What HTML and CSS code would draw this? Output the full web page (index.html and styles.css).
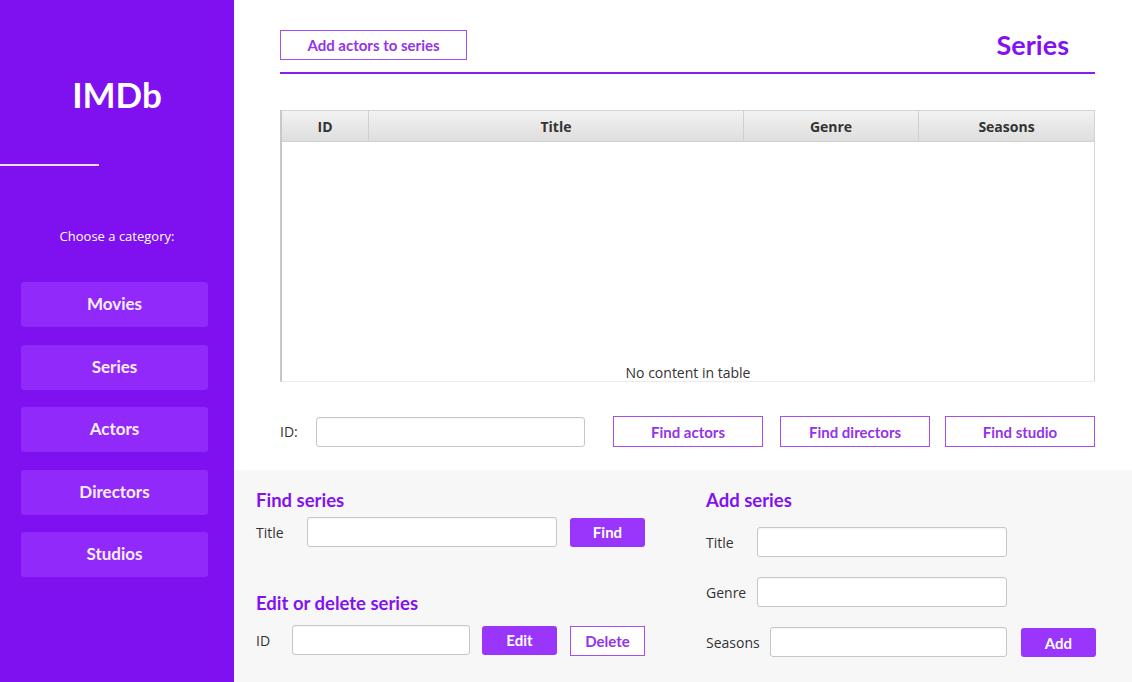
FILE: index.html
```html
<!DOCTYPE html>
<html>
<head>
<meta charset="utf-8">
<link rel="stylesheet" href="styles.css">
</head>
<body>
<div class="app">
  <aside class="sidebar">
    <div class="logo">IMDb</div>
    <div class="logo-line"></div>
    <div class="choose">Choose a category:</div>
    <nav class="nav">
      <div class="nav-btn">Movies</div>
      <div class="nav-btn">Series</div>
      <div class="nav-btn">Actors</div>
      <div class="nav-btn">Directors</div>
      <div class="nav-btn">Studios</div>
    </nav>
  </aside>
  <main class="main">
    <section class="top">
      <div class="header">
        <div class="btn-outline btn-add-actors">Add actors to series</div>
        <div class="page-title">Series</div>
      </div>
      <div class="header-line"></div>
      <div class="table">
        <div class="thead">
          <div class="th c-id">ID</div>
          <div class="th c-title">Title</div>
          <div class="th c-genre">Genre</div>
          <div class="th c-seasons">Seasons</div>
        </div>
        <div class="tbody">
          <div class="empty">No content in table</div>
        </div>
      </div>
      <div class="id-row">
        <span class="label">ID:</span>
        <div class="input id-input"></div>
        <div class="btn-outline btn-find">Find actors</div>
        <div class="btn-outline btn-find">Find directors</div>
        <div class="btn-outline btn-find">Find studio</div>
      </div>
    </section>
    <section class="bottom">
      <div class="col-left">
        <div class="block">
          <div class="section-title">Find series</div>
          <div class="row">
            <span class="label lbl-title">Title</span>
            <div class="input find-input"></div>
            <div class="btn-fill">Find</div>
          </div>
        </div>
        <div class="block block-edit">
          <div class="section-title">Edit or delete series</div>
          <div class="row">
            <span class="label lbl-id">ID</span>
            <div class="input edit-input"></div>
            <div class="btn-fill">Edit</div>
            <div class="btn-outline btn-delete">Delete</div>
          </div>
        </div>
      </div>
      <div class="col-right">
        <div class="section-title">Add series</div>
        <div class="add-rows">
          <div class="row">
            <span class="label lbl-w">Title</span>
            <div class="input add-input"></div>
          </div>
          <div class="row">
            <span class="label lbl-w">Genre</span>
            <div class="input add-input"></div>
          </div>
          <div class="row">
            <span class="label lbl-seasons">Seasons</span>
            <div class="input seasons-input"></div>
            <div class="btn-fill btn-add">Add</div>
          </div>
        </div>
      </div>
    </section>
  </main>
</div>
</body>
</html>
```

FILE: styles.css
```css
* { box-sizing: border-box; }
html, body { margin: 0; padding: 0; }
body {
  width: 1132px;
  height: 682px;
  overflow: hidden;
  font-family: "Open Sans", "Noto Sans", sans-serif;
  background: #fff;
}
.app {
  display: flex;
  height: 682px;
}
.sidebar {
  width: 234px;
  flex: none;
  background: #7f10f0;
  display: flex;
  flex-direction: column;
  color: #fff;
}
.logo {
  margin-top: 73px;
  text-align: center;
  font-family: "Lato", sans-serif;
  font-weight: 700;
  font-size: 35px;
  line-height: 42px;
}
.logo-line {
  margin-top: 49px;
  width: 99px;
  height: 2px;
  background: #f2d9f5;
}
.choose {
  margin-top: 61px;
  text-align: center;
  font-size: 13px;
  line-height: 18px;
  color: #fff;
}
.nav {
  margin-top: 37px;
  padding: 0 26px 0 21px;
  display: flex;
  flex-direction: column;
  gap: 17.5px;
}
.nav-btn {
  height: 45px;
  background: #9129fb;
  border-radius: 3px;
  display: flex;
  align-items: center;
  justify-content: center;
  font-family: "Lato", sans-serif;
  font-weight: 700;
  font-size: 17px;
  color: #fbeefe;
  padding-bottom: 2px;
}
.main {
  flex: 1;
  display: flex;
  flex-direction: column;
}
.top {
  height: 470px;
  padding: 30px 38px 0 46px;
  background: #fff;
}
.header {
  display: flex;
  align-items: center;
  justify-content: space-between;
  height: 30px;
}
.btn-outline {
  border: 1.5px solid #a44ef5;
  color: #9333ea;
  background: #fff;
  display: flex;
  align-items: center;
  justify-content: center;
  font-family: "Lato", sans-serif;
  font-weight: 700;
  font-size: 15px;
}
.btn-add-actors {
  width: 187px;
  height: 30px;
}
.page-title {
  font-family: "Lato", sans-serif;
  font-weight: 700;
  font-size: 27px;
  color: #8412ee;
  margin-right: 26px;
  margin-top: -2px;
}
.header-line {
  margin-top: 12px;
  height: 2px;
  background: #8a1cf0;
}
.table {
  margin-top: 36px;
  height: 272px;
  border: 1px solid #d4d4d4;
  border-left: 2px solid #c8c8c8;
  border-bottom: 1px solid #ececec;
  display: flex;
  flex-direction: column;
  overflow: hidden;
}
.thead {
  display: flex;
  height: 31px;
  background: linear-gradient(#f2f2f2, #dedede);
  border-bottom: 1px solid #d0d0d0;
}
.th {
  display: flex;
  align-items: center;
  justify-content: center;
  font-weight: 700;
  font-size: 14px;
  color: #333;
  border-right: 1px solid #d0d0d0;
}
.c-id { width: 87px; }
.c-title { width: 375px; }
.c-genre { width: 175px; }
.c-seasons { flex: 1; border-right: none; }
.tbody {
  flex: 1;
  display: flex;
  align-items: flex-end;
  justify-content: center;
}
.empty {
  font-size: 14px;
  color: #333;
  line-height: 18px;
  margin-bottom: -1px;
}
.id-row {
  margin-top: 34px;
  display: flex;
  align-items: center;
  height: 31px;
}
.label {
  font-size: 14px;
  color: #333;
}
.id-row .label { width: 36px; }
.input {
  height: 30px;
  background: #fff;
  border: 1px solid #c6c6c6;
  border-radius: 3px;
  box-shadow: inset 0 1px 1px rgba(0,0,0,0.04);
}
.id-input { width: 269px; margin-right: 28px; }
.btn-find {
  width: 150px;
  height: 31px;
}
.btn-find + .btn-find { margin-left: 17px; }
.btn-find:last-child { margin-left: 15px; }
.bottom {
  flex: 1;
  background: #f7f7f7;
  display: flex;
  padding: 18px 0 0 22px;
}
.col-left { width: 450px; }
.section-title {
  font-family: "Lato", sans-serif;
  font-weight: 700;
  font-size: 18.5px;
  color: #8412ee;
  line-height: 24px;
}
.row {
  display: flex;
  align-items: center;
}
.block .row { margin-top: 5px; }
.lbl-title { width: 51px; }
.find-input { width: 250px; margin-right: 13px; }
.btn-fill {
  width: 75px;
  height: 29px;
  background: #9a35fb;
  border-radius: 3px;
  color: #fff;
  display: flex;
  align-items: center;
  justify-content: center;
  font-family: "Lato", sans-serif;
  font-weight: 700;
  font-size: 15px;
}
.block-edit { margin-top: 44px; }
.block-edit .row { margin-top: 9px; }
.lbl-id { width: 36px; }
.edit-input { width: 178px; margin-right: 12px; }
.btn-delete {
  width: 75px;
  height: 30px;
  margin-left: 13px;
  margin-top: 2px;
}
.col-right { width: 420px; }
.add-rows {
  margin-top: 15px;
  display: flex;
  flex-direction: column;
  gap: 20px;
}
.lbl-w { width: 51px; }
.add-input { width: 250px; }
.lbl-seasons { width: 64px; }
.seasons-input { width: 237px; margin-right: 14px; }
.btn-add { width: 75px; height: 29px; margin-top: 1px; }
```
